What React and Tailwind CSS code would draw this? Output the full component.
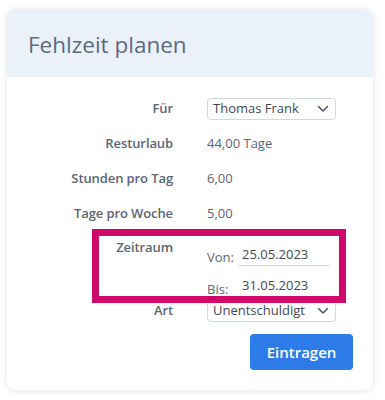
import React from "react";

function Chevron() {
  return (
    <svg width="12" height="8" viewBox="0 0 12 8" fill="none" stroke="#4b5563" strokeWidth="1.5" strokeLinecap="round" strokeLinejoin="round">
      <path d="M1.5 1.5 6 6l4.5-4.5" />
    </svg>
  );
}

function Label({ children, className = "" }) {
  return (
    <div className={"w-[166px] shrink-0 text-right text-[13px] tracking-[-0.1px] font-semibold text-[#5b6573] " + className}>
      {children}
    </div>
  );
}

export default function App() {
  return (
    <div className="w-[385px] h-[400px] bg-white pt-[9px] pl-[7px]" style={{ fontFamily: '"Open Sans", "Noto Sans", sans-serif' }}>
      <div className="relative w-[366px] h-[381px] rounded-[8px] bg-white shadow-[0_1px_6px_rgba(0,0,0,0.12)] overflow-hidden">
        <div className="h-[68px] bg-[#ebf1f9] flex items-center pl-[21px] pt-[3px]">
          <span className="text-[22.5px] text-[#5c6a7e]">Fehlzeit planen</span>
        </div>
        <div className="pt-[14px] pr-[20px]">
          <div className="flex items-center h-[35px]">
            <Label>Für</Label>
            <div className="ml-[34px] w-[129px] h-[22px] border border-[#cfd7e3] rounded-[4px] flex items-center justify-between pl-[5px] pr-[6px] text-[13px] text-[#3f4754]">
              <span>Thomas Frank</span>
              <Chevron />
            </div>
          </div>
          <div className="flex items-center h-[35px]">
            <Label>Resturlaub</Label>
            <div className="ml-[34px] text-[13px] text-[#5b6573]">44,00 Tage</div>
          </div>
          <div className="flex items-center h-[35px]">
            <Label>Stunden pro Tag</Label>
            <div className="ml-[34px] text-[13px] text-[#5b6573]">6,00</div>
          </div>
          <div className="flex items-center h-[35px]">
            <Label>Tage pro Woche</Label>
            <div className="ml-[34px] text-[13px] text-[#5b6573]">5,00</div>
          </div>
          <div className="flex items-start">
            <Label className="pt-[7px]">Zeitraum</Label>
            <div className="ml-[34px] pt-[13px] flex flex-col gap-[9px]">
              <div className="flex items-end h-[22px]">
                <span className="w-[32px] text-[13px] text-[#5b6573] leading-[18px]">Von:</span>
                <div className="w-[90px] h-[22px] border-b border-[#cfd4da] pl-[3px] text-[13px] text-[#3f4754] leading-[20px]">25.05.2023</div>
              </div>
              <div className="flex items-end h-[22px]">
                <span className="w-[32px] text-[13px] text-[#5b6573] leading-[16px]">Bis:</span>
                <div className="w-[90px] h-[22px] border-b border-[#cfd4da] pl-[3px] text-[13px] text-[#3f4754] leading-[20px]">31.05.2023</div>
              </div>
            </div>
          </div>
          <div className="flex items-center mt-[3px] h-[22px]">
            <Label>Art</Label>
            <div className="ml-[34px] w-[129px] h-[22px] border border-[#cfd7e3] rounded-[4px] flex items-center justify-between pl-[5px] pr-[6px] text-[13px] text-[#3f4754]">
              <span>Unentschuldigt</span>
              <Chevron />
            </div>
          </div>
          <div className="flex justify-end mt-[12px]">
            <button className="w-[103px] h-[36px] rounded-[4px] bg-[#2d7be6] text-white text-[15px] font-semibold">Eintragen</button>
          </div>
        </div>
        <div className="absolute left-[85px] top-[220px] w-[254px] h-[74px] border-[7px] border-[#cc0a6a]"></div>
      </div>
    </div>
  );
}
